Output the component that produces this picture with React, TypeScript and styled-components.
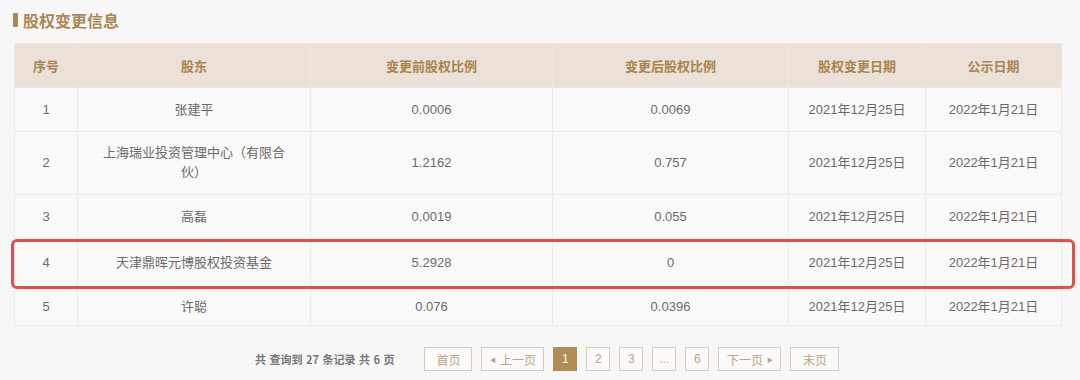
import React from "react";
import styled, { createGlobalStyle } from "styled-components";

const GlobalStyle = createGlobalStyle`
  html, body {
    margin: 0;
    padding: 0;
    background: #f7f7f7;
    font-family: "Liberation Sans", "Noto Sans CJK SC", sans-serif;
  }
`;

const Page = styled.div`
  width: 1080px;
  height: 380px;
  padding: 11px 19px 0 14px;
  box-sizing: border-box;
`;

const Title = styled.h2`
  display: flex;
  align-items: center;
  gap: 5px;
  margin: 0 0 14px -1px;
  height: 18px;
  font-size: 16px;
  font-weight: bold;
  color: #a98856;
  font-family: "Noto Sans CJK SC", sans-serif;
`;

const TitleBar = styled.span`
  display: inline-block;
  width: 5px;
  height: 14px;
  border-radius: 1px;
  background: #a98856;
`;

const Table = styled.table`
  width: 1047px;
  border-collapse: collapse;
  table-layout: fixed;
  background: #faf9f9;
  font-size: 13px;
  color: #6b6b6b;
`;

const Th = styled.th<{ $w: number }>`
  width: ${(p) => p.$w}px;
  height: 43px;
  padding: 0;
  background: #ebe1d8;
  color: #a8844e;
  font-weight: bold;
  font-size: 13px;
  font-family: "Noto Sans CJK SC", sans-serif;
  border: 1px solid #efe7e2;
  text-align: center;
`;

const Row = styled.tr<{ $h: number; $mark?: boolean }>`
  height: ${(p) => p.$h}px;

  td:first-child {
    position: relative;
  }
  ${(p) =>
    p.$mark &&
    `
    td:first-child::after {
      content: "";
      position: absolute;
      left: -4px;
      top: 0px;
      width: 1058px;
      height: 44px;
      border: 3px solid #e0504a;
      border-radius: 6px;
      pointer-events: none;
    }
  `}
`;

const Td = styled.td<{ $pad?: number }>`
  padding: 0 ${(p) => p.$pad ?? 24}px;
  text-align: center;
  line-height: 20px;
  white-space: ${(p) => (p.$pad !== undefined ? "nowrap" : "normal")};
  border: 1px solid #f1e9e7;
`;

const Pager = styled.div`
  display: flex;
  align-items: center;
  margin: 21px 0 0 241px;
`;

const Summary = styled.span`
  font-size: 11px;
  font-weight: bold;
  color: #777;
  margin-right: 30px;
  word-spacing: 1px;
  font-family: "Noto Sans CJK SC", sans-serif;
`;

const PageBtn = styled.span<{ $w: number; $active?: boolean }>`
  display: inline-flex;
  align-items: center;
  justify-content: center;
  gap: 4px;
  width: ${(p) => p.$w}px;
  height: 24px;
  box-sizing: border-box;
  margin-right: 9px;
  font-size: 12px;
  font-family: "Liberation Sans", "Noto Sans CJK SC", sans-serif;
  color: ${(p) => (p.$active ? "#fff" : "#bba487")};
  background: ${(p) => (p.$active ? "#b08d57" : "#fbfaf9")};
  border: 1px solid ${(p) => (p.$active ? "#b08d57" : "#dccbbb")};
`;

const Arrow = styled.span`
  font-size: 6px;
`;

const rows = [
  { no: "1", name: "张建平", before: "0.0006", after: "0.0069", h: 44 },
  { no: "2", name: "上海瑞业投资管理中心（有限合伙）", before: "1.2162", after: "0.757", h: 63 },
  { no: "3", name: "高磊", before: "0.0019", after: "0.055", h: 44 },
  { no: "4", name: "天津鼎晖元博股权投资基金", before: "5.2928", after: "0", h: 49, mark: true },
  { no: "5", name: "许聪", before: "0.076", after: "0.0396", h: 38 },
];

export default function App() {
  return (
    <Page>
      <GlobalStyle />
      <Title>
        <TitleBar />
        股权变更信息
      </Title>
      <Table>
        <thead>
          <tr>
            <Th $w={62}>序号</Th>
            <Th $w={232}>股东</Th>
            <Th $w={241}>变更前股权比例</Th>
            <Th $w={235}>变更后股权比例</Th>
            <Th $w={136}>股权变更日期</Th>
            <Th $w={135}>公示日期</Th>
          </tr>
        </thead>
        <tbody>
          {rows.map((r) => (
            <Row key={r.no} $h={r.h} $mark={r.mark}>
              <Td>{r.no}</Td>
              <Td>{r.name}</Td>
              <Td>{r.before}</Td>
              <Td>{r.after}</Td>
              <Td $pad={2}>2021年12月25日</Td>
              <Td $pad={2}>2022年1月21日</Td>
            </Row>
          ))}
        </tbody>
      </Table>
      <Pager>
        <Summary>共 查询到 27 条记录 共 6 页</Summary>
        <PageBtn $w={48}>首页</PageBtn>
        <PageBtn $w={63}>
          <Arrow>◀</Arrow>上一页
        </PageBtn>
        <PageBtn $w={24} $active>1</PageBtn>
        <PageBtn $w={24}>2</PageBtn>
        <PageBtn $w={24}>3</PageBtn>
        <PageBtn $w={24}>...</PageBtn>
        <PageBtn $w={24}>6</PageBtn>
        <PageBtn $w={63}>
          下一页<Arrow>▶</Arrow>
        </PageBtn>
        <PageBtn $w={49}>末页</PageBtn>
      </Pager>
    </Page>
  );
}
